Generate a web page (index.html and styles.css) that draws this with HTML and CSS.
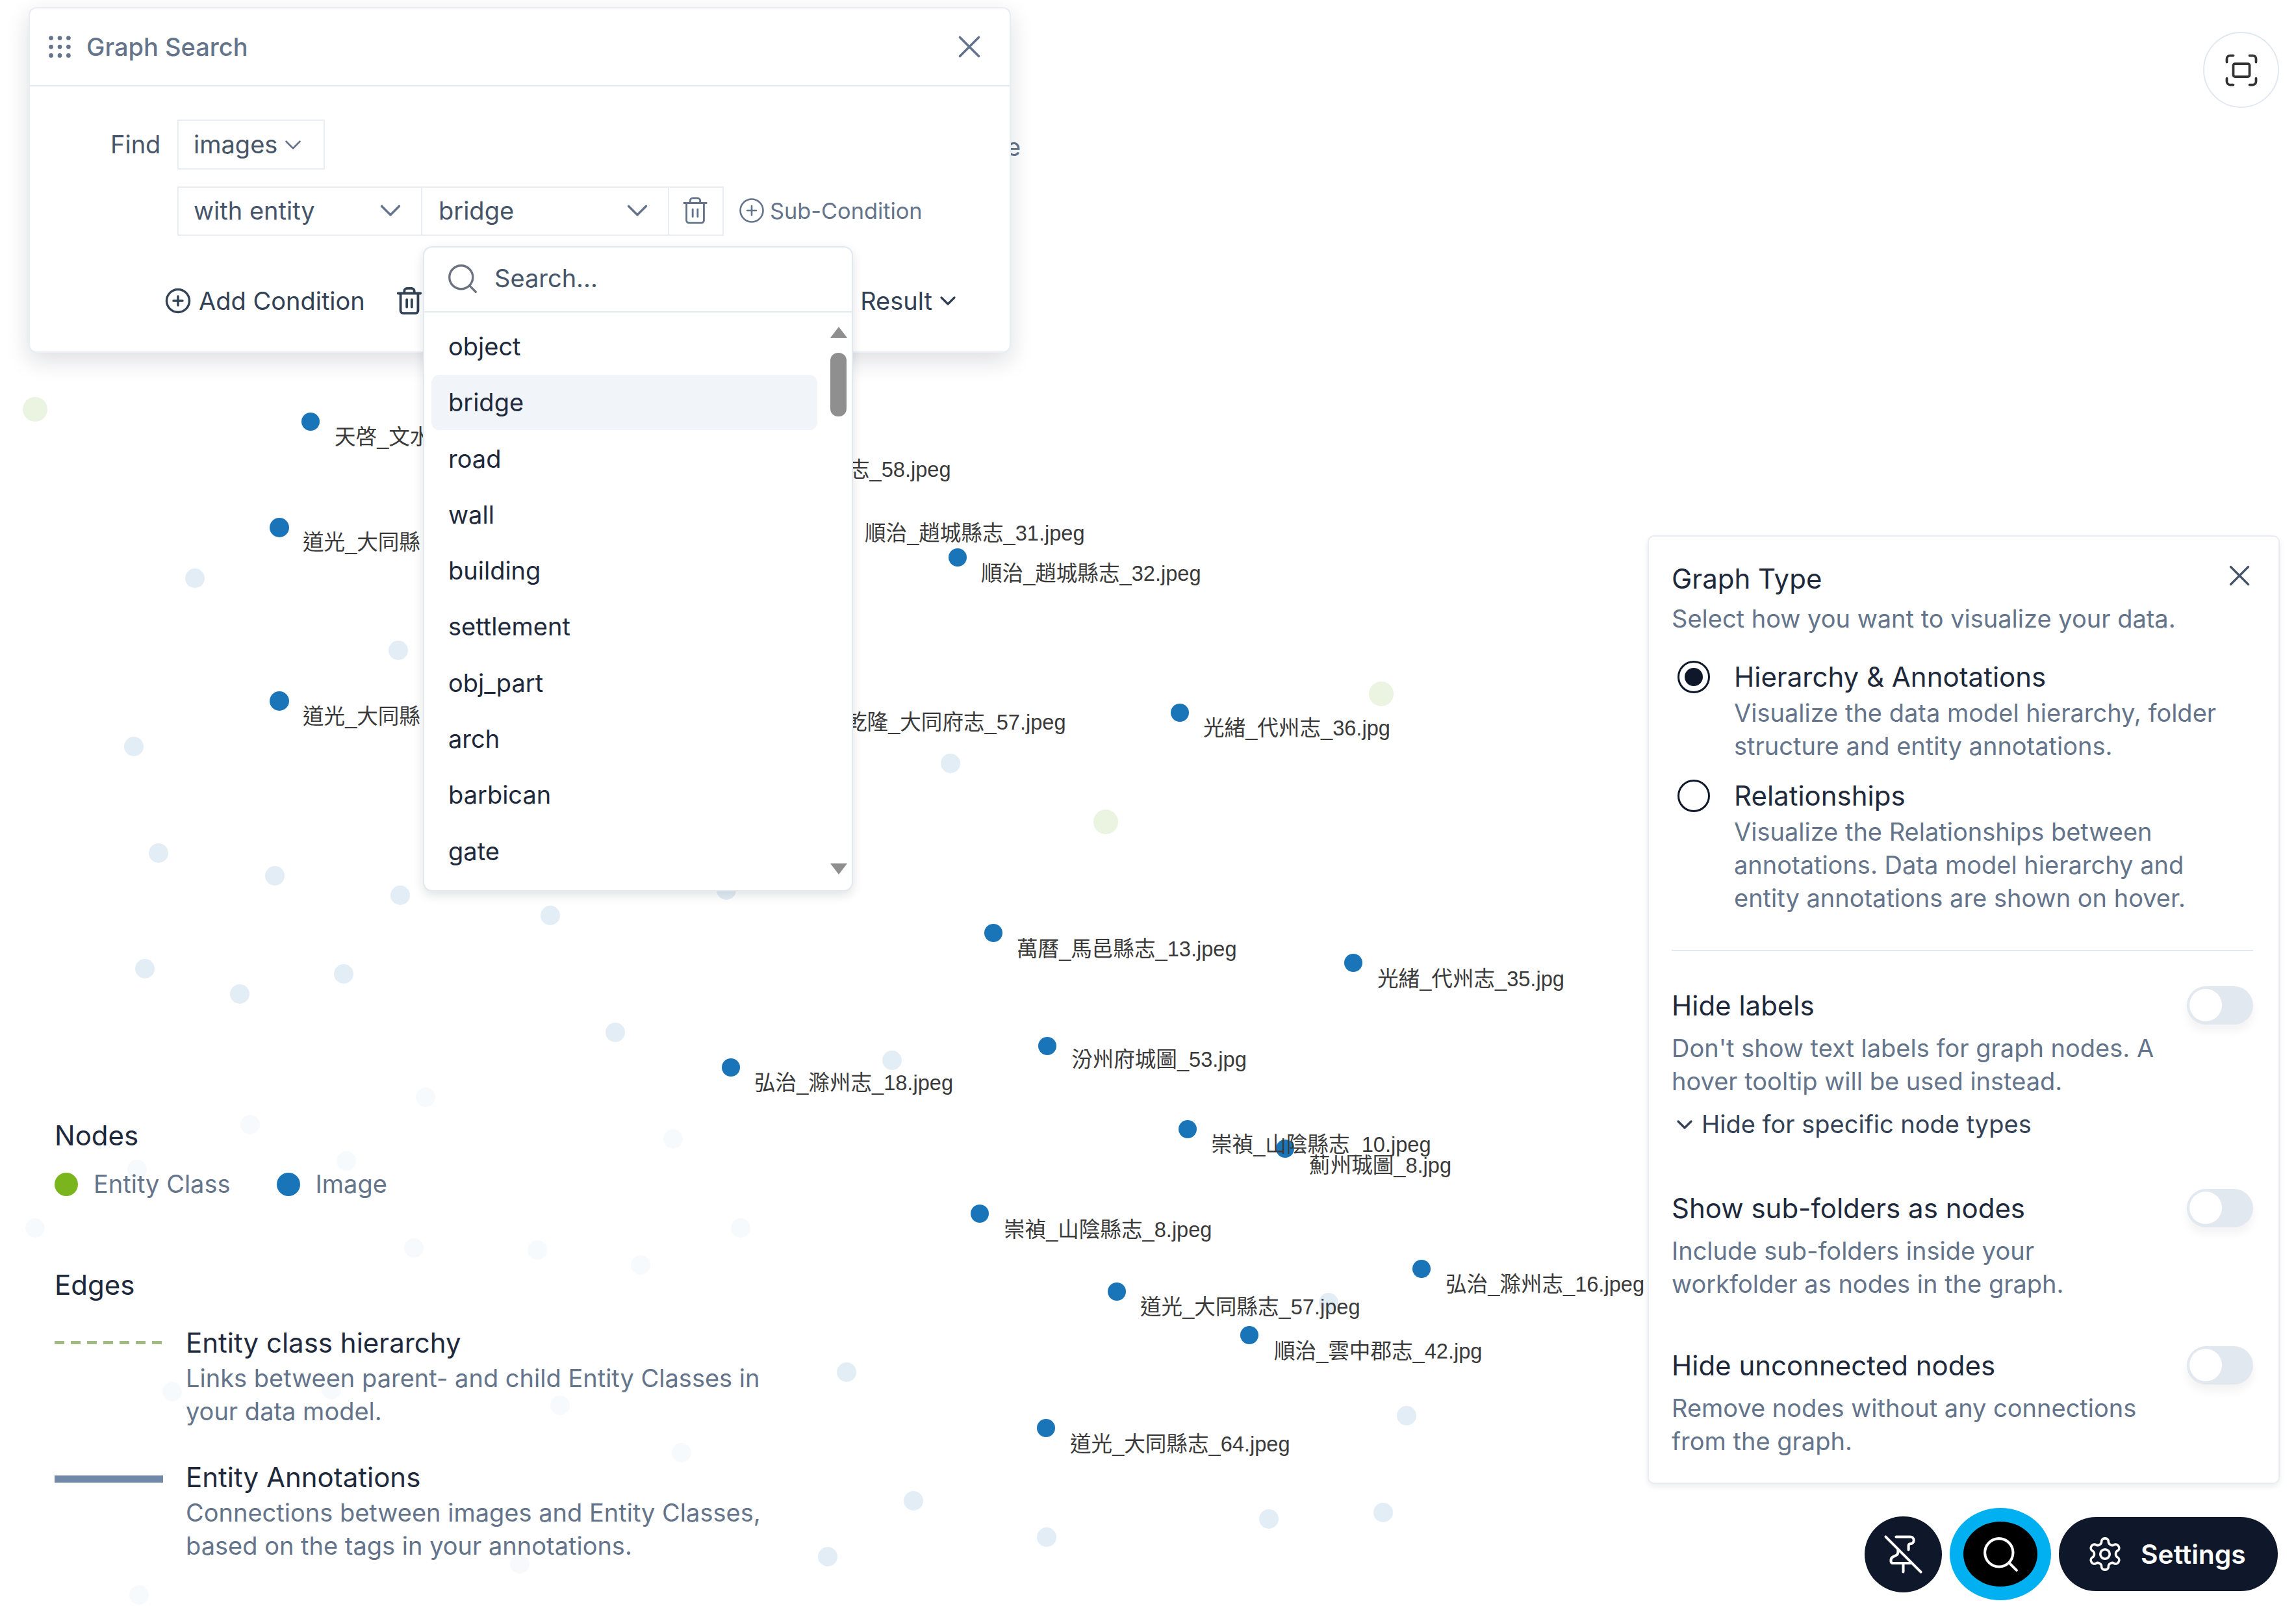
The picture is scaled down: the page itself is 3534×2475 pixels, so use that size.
FILE: index.html
```html
<!DOCTYPE html>
<html lang="en">
<head>
    <meta charset="UTF-8">
    <title>Graph Search</title>
    <link rel="stylesheet" href="styles.css">
</head>
<body>

    <!-- Icons -->
    <svg class="icon-defs">
        <symbol id="i-x" viewBox="0 0 24 24"><path d="M18 6 6 18M6 6l12 12"/></symbol>
        <symbol id="i-chevron" viewBox="0 0 24 24"><path d="m6 9 6 6 6-6"/></symbol>
        <symbol id="i-trash" viewBox="0 0 24 24"><path d="M3 6h18M19 6v14c0 1-1 2-2 2H7c-1 0-2-1-2-2V6M8 6V4c0-1 1-2 2-2h4c1 0 2 1 2 2v2M10 11v6M14 11v6"/></symbol>
        <symbol id="i-plus" viewBox="0 0 24 24"><circle cx="12" cy="12" r="10"/><path d="M8 12h8M12 8v8"/></symbol>
        <symbol id="i-search" viewBox="0 0 24 24"><circle cx="11" cy="11" r="8"/><path d="m21 21-4.3-4.3"/></symbol>
        <symbol id="i-pin-off" viewBox="0 0 24 24"><path d="M12 17v5M15 9.34V7a1 1 0 0 1 1-1 2 2 0 0 0 0-4H7.89M2 2l20 20M9 9v1.76a2 2 0 0 1-1.11 1.79l-1.78.9A2 2 0 0 0 5 15.24V16a1 1 0 0 0 1 1h11"/></symbol>
        <symbol id="i-gear" viewBox="0 0 24 24"><path d="M12.22 2h-.44a2 2 0 0 0-2 2v.18a2 2 0 0 1-1 1.73l-.43.25a2 2 0 0 1-2 0l-.15-.08a2 2 0 0 0-2.73.73l-.22.38a2 2 0 0 0 .73 2.73l.15.1a2 2 0 0 1 1 1.72v.51a2 2 0 0 1-1 1.74l-.15.09a2 2 0 0 0-.73 2.73l.22.38a2 2 0 0 0 2.73.73l.15-.08a2 2 0 0 1 2 0l.43.25a2 2 0 0 1 1 1.73V20a2 2 0 0 0 2 2h.44a2 2 0 0 0 2-2v-.18a2 2 0 0 1 1-1.73l.43-.25a2 2 0 0 1 2 0l.15.08a2 2 0 0 0 2.73-.73l.22-.39a2 2 0 0 0-.73-2.73l-.15-.08a2 2 0 0 1-1-1.74v-.5a2 2 0 0 1 1-1.74l.15-.09a2 2 0 0 0 .73-2.73l-.22-.38a2 2 0 0 0-2.73-.73l-.15.08a2 2 0 0 1-2 0l-.43-.25a2 2 0 0 1-1-1.73V4a2 2 0 0 0-2-2z"/><circle cx="12" cy="12" r="3"/></symbol>
        <symbol id="i-focus" viewBox="0 0 24 24"><path d="M3 7V5a2 2 0 0 1 2-2h2M17 3h2a2 2 0 0 1 2 2v2M21 17v2a2 2 0 0 1-2 2h-2M7 21H5a2 2 0 0 1-2-2v-2"/><rect x="7" y="8" width="10" height="8" rx="1"/></symbol>
        <symbol id="i-grip" viewBox="0 0 24 24"><circle cx="5" cy="5" r="1"/><circle cx="12" cy="5" r="1"/><circle cx="19" cy="5" r="1"/><circle cx="5" cy="12" r="1"/><circle cx="12" cy="12" r="1"/><circle cx="19" cy="12" r="1"/><circle cx="5" cy="19" r="1"/><circle cx="12" cy="19" r="1"/><circle cx="19" cy="19" r="1"/></symbol>
    </svg>

    <!-- Graph canvas -->
    <svg class="graph" viewBox="0 0 3534 2475">
        <g class="faint">
            <circle cx="655" cy="1689" r="15"/><circle cx="385" cy="1731" r="15"/><circle cx="1036" cy="1753" r="15"/>
            <circle cx="533" cy="1787" r="15"/><circle cx="211" cy="1800" r="15"/><circle cx="54" cy="1890" r="15"/>
            <circle cx="1140" cy="1890" r="15"/><circle cx="637" cy="1921" r="15"/><circle cx="827" cy="1924" r="15"/>
            <circle cx="986" cy="1947" r="15"/><circle cx="265" cy="2142" r="15"/><circle cx="510" cy="2139" r="15"/>
            <circle cx="862" cy="2163" r="15"/><circle cx="1049" cy="2236" r="15"/><circle cx="800" cy="2407" r="15"/>
            <circle cx="214" cy="2455" r="15"/>
        </g>
        <g class="light">
            <circle cx="300" cy="890" r="15"/><circle cx="613" cy="1001" r="15"/><circle cx="206" cy="1149" r="15"/>
            <circle cx="244" cy="1313" r="15"/><circle cx="423" cy="1348" r="15"/><circle cx="616" cy="1378" r="15"/>
            <circle cx="223" cy="1491" r="15"/><circle cx="369" cy="1530" r="15"/><circle cx="529" cy="1499" r="15"/>
            <circle cx="847" cy="1409" r="15"/><circle cx="1118" cy="1370" r="15"/><circle cx="947" cy="1589" r="15"/>
            <circle cx="1463" cy="1175" r="15"/><circle cx="1373" cy="1632" r="15"/><circle cx="2045" cy="2005" r="15"/>
            <circle cx="1303" cy="2112" r="15"/><circle cx="2165" cy="2179" r="15"/><circle cx="1406" cy="2310" r="15"/>
            <circle cx="1953" cy="2338" r="15"/><circle cx="2129" cy="2328" r="15"/><circle cx="1611" cy="2366" r="15"/>
            <circle cx="1274" cy="2396" r="15"/>
        </g>
        <g class="light-green">
            <circle cx="54" cy="630" r="19"/><circle cx="2126" cy="1068" r="19"/><circle cx="1702" cy="1265" r="19"/>
        </g>
        <g class="image-nodes">
            <circle cx="478" cy="649" r="14"/><circle cx="430" cy="812" r="15"/><circle cx="430" cy="1079" r="15"/>
            <circle cx="1474" cy="858" r="14"/><circle cx="1816" cy="1097" r="14"/><circle cx="1529" cy="1436" r="14"/>
            <circle cx="2083" cy="1482" r="14"/><circle cx="1612" cy="1610" r="14"/><circle cx="1125" cy="1643" r="14"/>
            <circle cx="1828" cy="1738" r="14"/><circle cx="1978" cy="1768" r="14"/><circle cx="1508" cy="1868" r="14"/>
            <circle cx="2188" cy="1953" r="14"/><circle cx="1719" cy="1988" r="14"/><circle cx="1923" cy="2055" r="14"/>
            <circle cx="1610" cy="2198" r="14"/>
        </g>
        <g class="labels">
            <text x="515" y="672">天啓_文水</text>
            <text x="466" y="834">道光_大同縣</text>
            <text x="466" y="1102">道光_大同縣</text>
            <text x="1125" y="722">道光_大同縣志_58.jpeg</text>
            <text x="1331" y="820">順治_趙城縣志_31.jpeg</text>
            <text x="1510" y="882">順治_趙城縣志_32.jpeg</text>
            <text x="1302" y="1111">乾隆_大同府志_57.jpeg</text>
            <text x="1852" y="1120">光緒_代州志_36.jpg</text>
            <text x="1565" y="1460">萬曆_馬邑縣志_13.jpeg</text>
            <text x="2120" y="1506">光緒_代州志_35.jpg</text>
            <text x="1649" y="1630">汾州府城圖_53.jpg</text>
            <text x="1161" y="1666">弘治_滁州志_18.jpeg</text>
            <text x="1864" y="1761">崇禎_山陰縣志_10.jpeg</text>
            <text x="2015" y="1793">薊州城圖_8.jpg</text>
            <text x="1545" y="1892">崇禎_山陰縣志_8.jpeg</text>
            <text x="2225" y="1976">弘治_滁州志_16.jpeg</text>
            <text x="1755" y="2011">道光_大同縣志_57.jpeg</text>
            <text x="1961" y="2079">順治_雲中郡志_42.jpg</text>
            <text x="1647" y="2222">道光_大同縣志_64.jpeg</text>
        </g>
        <text class="peek" x="1549" y="226">e</text>
    </svg>

    <!-- Graph search -->
    <section class="search-panel">
        <header class="search-head">
            <svg class="ic ic-grip"><use href="#i-grip"/></svg>
            <span class="search-title">Graph Search</span>
            <svg class="ic ic-close"><use href="#i-x"/></svg>
        </header>
        <div class="search-body">
            <div class="find-row">
                <span class="find-label">Find</span>
                <div class="find-select">images <svg class="ic ic-chev-sm"><use href="#i-chevron"/></svg></div>
            </div>
            <div class="cond-row">
                <div class="cond-group">
                    <div class="cond-cell cell-type">with entity <svg class="ic ic-chev"><use href="#i-chevron"/></svg></div>
                    <div class="cond-cell cell-value">bridge <svg class="ic ic-chev"><use href="#i-chevron"/></svg></div>
                    <div class="cond-cell cell-trash"><svg class="ic ic-trash"><use href="#i-trash"/></svg></div>
                </div>
                <div class="sub-cond"><svg class="ic ic-plus"><use href="#i-plus"/></svg>Sub-Condition</div>
            </div>
            <div class="action-row">
                <svg class="ic ic-plus ic-bold"><use href="#i-plus"/></svg>
                <span class="add-cond">Add Condition</span>
                <svg class="ic ic-trash ic-trash-dark"><use href="#i-trash"/></svg>
                <span class="result">Result</span>
                <svg class="ic ic-chev-result"><use href="#i-chevron"/></svg>
            </div>
            <div class="dropdown">
                <div class="dropdown-search">
                    <svg class="ic ic-search"><use href="#i-search"/></svg>
                    <span>Search...</span>
                </div>
                <div class="dropdown-body">
                    <ul class="dropdown-list">
                        <li>object</li>
                        <li class="active">bridge</li>
                        <li>road</li>
                        <li>wall</li>
                        <li>building</li>
                        <li>settlement</li>
                        <li>obj_part</li>
                        <li>arch</li>
                        <li>barbican</li>
                        <li>gate</li>
                    </ul>
                    <div class="scrollbar">
                        <span class="arrow-up"></span>
                        <span class="thumb"></span>
                        <span class="arrow-down"></span>
                    </div>
                </div>
            </div>
        </div>
    </section>

    <button class="focus-btn"><svg class="ic ic-focus"><use href="#i-focus"/></svg></button>

    <!-- Legend -->
    <section class="legend">
        <h3>Nodes</h3>
        <div class="legend-nodes">
            <span class="dot dot-green"></span><span>Entity Class</span>
            <span class="dot dot-blue"></span><span>Image</span>
        </div>
        <h3 class="legend-edges">Edges</h3>
        <div class="edge edge-first">
            <span class="edge-line dashed"></span>
            <div>
                <h4>Entity class hierarchy</h4>
                <p>Links between parent- and child Entity Classes in your data model.</p>
            </div>
        </div>
        <div class="edge">
            <span class="edge-line solid"></span>
            <div>
                <h4>Entity Annotations</h4>
                <p>Connections between images and Entity Classes, based on the tags in your annotations.</p>
            </div>
        </div>
    </section>

    <!-- Settings -->
    <section class="settings">
        <svg class="ic ic-settings-close"><use href="#i-x"/></svg>
        <h3>Graph Type</h3>
        <p class="sub">Select how you want to visualize your data.</p>

        <div class="radio-row radio-first">
            <span class="radio checked"></span>
            <div>
                <h4>Hierarchy &amp; Annotations</h4>
                <p>Visualize the data model hierarchy, folder structure and entity annotations.</p>
            </div>
        </div>
        <div class="radio-row radio-second">
            <span class="radio"></span>
            <div>
                <h4>Relationships</h4>
                <p>Visualize the Relationships between annotations. Data model hierarchy and entity annotations are shown on hover.</p>
            </div>
        </div>

        <hr class="divider">

        <div class="option">
            <div class="option-text">
                <h4>Hide labels</h4>
                <p>Don't show text labels for graph nodes. A hover tooltip will be used instead.</p>
            </div>
            <span class="toggle"></span>
        </div>
        <div class="hide-specific"><svg class="ic ic-chev-hide"><use href="#i-chevron"/></svg>Hide for specific node types</div>

        <div class="option option-gap">
            <div class="option-text">
                <h4>Show sub-folders as nodes</h4>
                <p>Include sub-folders inside your<br>workfolder as nodes in the graph.</p>
            </div>
            <span class="toggle"></span>
        </div>
        <div class="option option-last">
            <div class="option-text">
                <h4>Hide unconnected nodes</h4>
                <p>Remove nodes without any connections from the graph.</p>
            </div>
            <span class="toggle"></span>
        </div>
    </section>

    <!-- Bottom buttons -->
    <div class="toolbar">
        <button class="round-btn"><svg class="ic ic-tool"><use href="#i-pin-off"/></svg></button>
        <button class="round-btn search-btn"><svg class="ic ic-tool"><use href="#i-search"/></svg></button>
        <button class="settings-btn"><svg class="ic ic-gear"><use href="#i-gear"/></svg>Settings</button>
    </div>

</body>
</html>
```

FILE: styles.css
```css
* {
    box-sizing: border-box;
}
body {
    position: relative;
    width: 3534px;
    height: 2475px;
    margin: 0;
    overflow: hidden;
    background-color: white;
    font-family: Inter, "Noto Sans", sans-serif;
    font-size: 38px;
    line-height: 51px;
    color: #64748b;
}
h3, h4, p, ul {
    margin: 0;
    padding: 0;
    font-weight: 400;
}
button {
    border: none;
    padding: 0;
    font-family: inherit;
}
.icon-defs {
    display: none;
}
.ic {
    flex: none;
    fill: none;
    stroke: currentColor;
    stroke-width: 1.5;
    stroke-linecap: round;
    stroke-linejoin: round;
}
.ic-bold {
    stroke-width: 2;
}

/* graph */
.graph {
    position: absolute;
    top: 0;
    left: 0;
    width: 3534px;
    height: 2475px;
}
.faint { fill: #f7fafc; }
.light { fill: #e3edf6; }
.light-green { fill: #eaf4e1; }
.image-nodes { fill: #1a75b8; }
.labels text {
    font-family: "Liberation Sans", "Noto Sans CJK TC", sans-serif;
    font-size: 32.6px;
    fill: #3a3a3a;
    dominant-baseline: central;
}
.peek {
    font-size: 38px;
    fill: #64748b;
    dominant-baseline: central;
}

/* search panel */
.search-panel {
    position: absolute;
    top: 11px;
    left: 44px;
    width: 1512px;
    height: 532px;
    background-color: white;
    border: 2px solid #e8edf4;
    border-radius: 12px;
    box-shadow: 0 12px 36px rgba(15, 23, 42, 0.14);
}
.search-head {
    display: flex;
    align-items: center;
    height: 120px;
    padding: 0 33px 0 23px;
    border-bottom: 2px solid #e2e8f0;
}
.ic-grip {
    width: 46px;
    height: 46px;
    fill: #64748b;
    stroke: #64748b;
}
.search-title {
    margin-left: 18px;
    font-size: 38px;
    font-weight: 500;
    color: #64748b;
}
.ic-close {
    width: 58px;
    height: 58px;
    margin-left: auto;
    color: #64748b;
}
.search-body {
    position: relative;
    padding-top: 51px;
    color: #475569;
}
.find-row {
    display: flex;
    align-items: center;
    padding-left: 124px;
}
.find-label {
    width: 103px;
}
.find-select {
    display: flex;
    align-items: center;
    width: 227px;
    height: 77px;
    padding-left: 23px;
    border: 2px solid #e8edf4;
}
.ic-chev-sm {
    width: 42px;
    height: 42px;
    margin-left: 3px;
    color: #64748b;
}
.cond-row {
    display: flex;
    align-items: center;
    margin-top: 26px;
    padding-left: 227px;
}
.cond-group {
    display: flex;
    height: 76px;
    border: 2px solid #e8edf4;
}
.cond-cell {
    display: flex;
    align-items: center;
    padding-left: 23px;
    padding-bottom: 2px;
}
.cell-type {
    width: 375px;
    border-right: 2px solid #e8edf4;
}
.cell-value {
    width: 380px;
    padding-left: 25px;
    border-right: 2px solid #e8edf4;
}
.cell-trash {
    width: 82px;
    padding-left: 17px;
}
.ic-chev {
    width: 54px;
    height: 54px;
    margin-left: auto;
    margin-right: 20px;
    color: #64748b;
}
.ic-trash {
    width: 46px;
    height: 46px;
    color: #64748b;
}
.ic-plus {
    width: 42px;
    height: 42px;
}
.sub-cond {
    display: flex;
    align-items: center;
    gap: 7px;
    margin-left: 22px;
    padding-bottom: 2px;
    font-size: 34.3px;
    color: #64748b;
}
.action-row {
    display: flex;
    align-items: center;
    height: 60px;
    margin-top: 70px;
    padding-left: 207px;
    color: #334155;
}
.add-cond {
    margin-left: 11px;
}
.ic-trash-dark {
    margin-left: 45px;
    stroke-width: 2;
    color: #334155;
}
.result {
    margin-left: auto;
}
.ic-chev-result {
    width: 40px;
    height: 40px;
    margin: 0 75px 0 4px;
    stroke-width: 2;
}

/* dropdown */
.dropdown {
    position: absolute;
    top: 246px;
    left: 605px;
    z-index: 2;
    width: 662px;
    height: 993px;
    background-color: white;
    border: 2px solid #e2e8f0;
    border-radius: 14px;
    box-shadow: 0 6px 16px rgba(15, 23, 42, 0.12);
    overflow: hidden;
}
.dropdown-search {
    display: flex;
    align-items: center;
    height: 100px;
    padding: 0 0 3px 32px;
    border-bottom: 2px solid #e2e8f0;
}
.ic-search {
    width: 54px;
    height: 54px;
    color: #6b7280;
}
.dropdown-search span {
    margin-left: 22px;
}
.dropdown-body {
    display: flex;
}
.dropdown-list {
    width: 605px;
    padding: 10px 0 0 11px;
    list-style: none;
}
.dropdown-list li {
    height: 85px;
    margin-bottom: 1.3px;
    padding-left: 26px;
    line-height: 85px;
    border-radius: 12px;
    color: #1e293b;
}
.dropdown-list .active {
    background-color: #f1f5f9;
}
.scrollbar {
    display: flex;
    flex-direction: column;
    align-items: center;
    width: 53px;
    height: 889px;
    padding: 22px 0 24px 12px;
}
.arrow-up, .arrow-down {
    width: 0;
    height: 0;
    border-left: 13px solid transparent;
    border-right: 13px solid transparent;
}
.arrow-up {
    border-bottom: 17px solid #8f8f8f;
}
.arrow-down {
    margin-top: auto;
    border-top: 17px solid #8f8f8f;
}
.thumb {
    width: 25px;
    height: 98px;
    margin-top: 23px;
    border-radius: 12px;
    background-color: #8f8f8f;
}

/* focus button */
.focus-btn {
    position: absolute;
    top: 49px;
    left: 3391px;
    display: flex;
    align-items: center;
    justify-content: center;
    width: 117px;
    height: 117px;
    background-color: white;
    border: 2px solid #e2e8f0;
    border-radius: 50%;
    color: #333;
}
.ic-focus {
    width: 60px;
    height: 60px;
}

/* legend */
.legend {
    position: absolute;
    top: 1718px;
    left: 84px;
    width: 1120px;
}
.legend h3, .legend h4 {
    font-size: 42px;
    line-height: 60px;
    color: #1e293b;
}
.legend h4 {
    line-height: 59px;
}
.legend-nodes {
    display: flex;
    align-items: center;
    margin-top: 19px;
}
.dot {
    width: 36px;
    height: 36px;
    border-radius: 50%;
}
.dot-green {
    margin-right: 24px;
    background-color: #7ab51d;
}
.dot-blue {
    margin: 0 24px 0 71px;
    background-color: #1a75b8;
}
.legend-edges {
    margin-top: 100px;
}
.edge {
    display: flex;
    gap: 35px;
    margin-top: 46px;
}
.edge-first {
    margin-top: 29px;
}
.edge-line {
    flex: none;
    width: 167px;
    margin-top: 27px;
}
.dashed {
    height: 5px;
    background-image: repeating-linear-gradient(to right, #a2bb84 0 15px, transparent 15px 25px);
}
.solid {
    height: 11px;
    background-color: #7089a9;
}

/* settings */
.settings {
    position: absolute;
    top: 824px;
    left: 2536px;
    width: 973px;
    height: 1460px;
    padding: 34px 39px 0 35px;
    background-color: white;
    border: 2px solid #e8edf4;
    border-radius: 10px;
    box-shadow: 0 4px 8px rgba(15, 23, 42, 0.08);
}
.settings h3, .settings h4 {
    font-size: 42px;
    line-height: 61px;
    color: #1e293b;
}
.ic-settings-close {
    position: absolute;
    top: 33px;
    right: 33px;
    width: 54px;
    height: 54px;
    color: #475569;
}
.sub {
    margin-top: 6px;
}
.radio-row {
    display: flex;
    gap: 37px;
}
.radio-first {
    margin-top: 33px;
}
.radio-second {
    margin-top: 20px;
}
.radio {
    flex: none;
    position: relative;
    width: 50px;
    height: 50px;
    margin: 6px 0 0 9px;
    border: 3px solid #0f172a;
    border-radius: 50%;
}
.radio.checked::after {
    content: "";
    position: absolute;
    top: 8px;
    left: 8px;
    width: 28px;
    height: 28px;
    border-radius: 50%;
    background-color: #0f172a;
}
.divider {
    margin: 54px 0 53px;
    border: none;
    border-top: 2px solid #e2e8f0;
}
.option {
    display: flex;
    justify-content: space-between;
    align-items: flex-start;
}
.option-text {
    width: 780px;
}
.option-text p {
    margin-top: 10px;
}
.option-gap {
    margin-top: 73px;
}
.option-last {
    margin-top: 69px;
}
.toggle {
    flex: none;
    position: relative;
    width: 102px;
    height: 59px;
    margin-top: 1px;
    border-radius: 30px;
    background-color: #e2e8f0;
    box-shadow: 0 10px 14px rgba(15, 23, 42, 0.05);
}
.toggle::after {
    content: "";
    position: absolute;
    top: 4px;
    left: 4px;
    width: 50px;
    height: 50px;
    border-radius: 50%;
    background-color: white;
}
.hide-specific {
    display: flex;
    align-items: center;
    gap: 6px;
    margin-top: 15px;
    color: #334155;
}
.ic-chev-hide {
    width: 40px;
    height: 40px;
    stroke-width: 2;
}

/* toolbar */
.toolbar {
    position: absolute;
    top: 2321px;
    left: 2870px;
    display: flex;
    align-items: center;
    gap: 12px;
    height: 142px;
}
.round-btn {
    display: flex;
    align-items: center;
    justify-content: center;
    width: 119px;
    height: 117px;
    border-radius: 50%;
    background-color: #0f172a;
    color: white;
}
.search-btn {
    width: 156px;
    height: 142px;
    background-color: black;
    border: 21px solid #00b0f0;
}
.ic-tool {
    width: 65px;
    height: 65px;
}
.settings-btn {
    display: flex;
    align-items: center;
    gap: 26px;
    width: 337px;
    height: 114px;
    padding-left: 42px;
    border-radius: 58px;
    background-color: #0f172a;
    color: white;
    font-size: 40.8px;
    font-weight: 600;
}
.ic-gear {
    width: 58px;
    height: 58px;
}
```
